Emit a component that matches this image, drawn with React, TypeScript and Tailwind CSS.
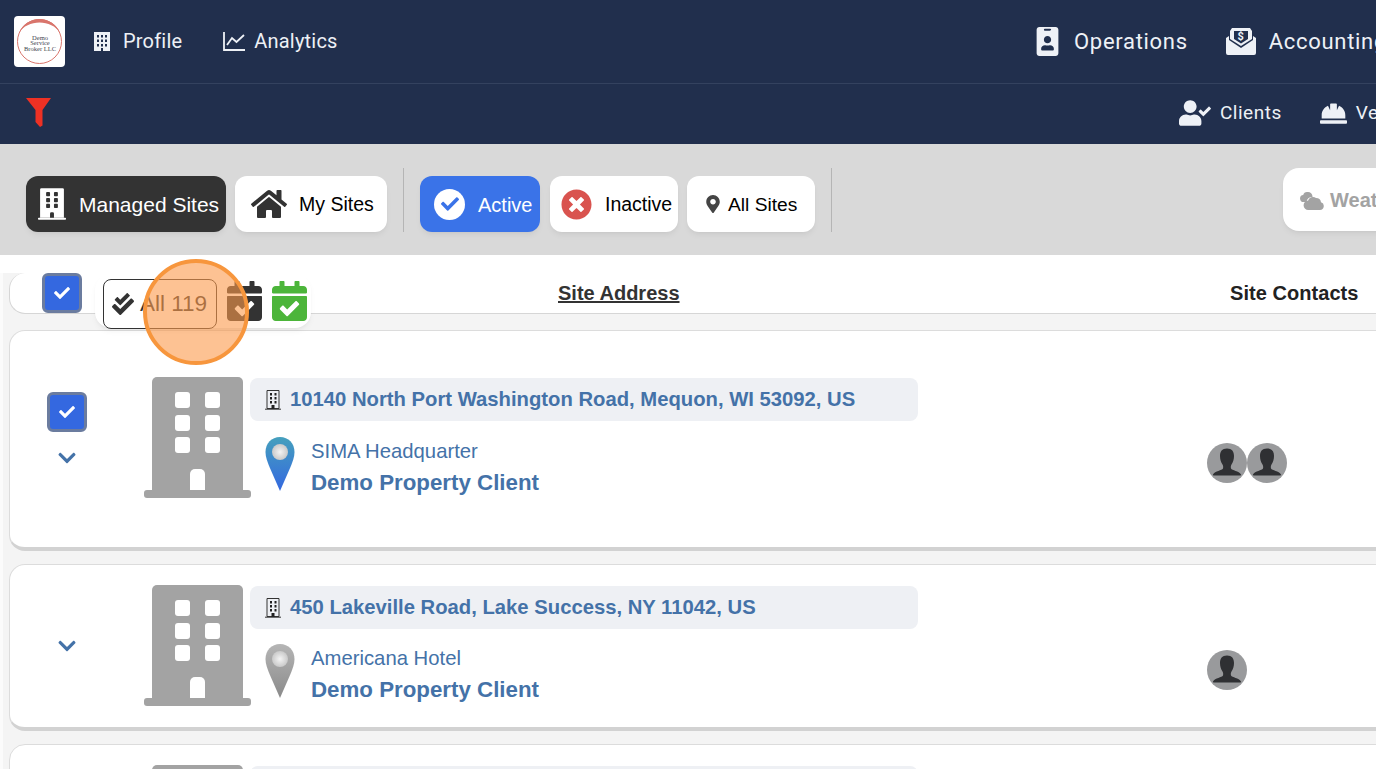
import { ReactNode } from 'react'
import {
  FaCalendarCheck,
  FaCheck,
  FaCheckDouble,
  FaChevronDown,
  FaHardHat,
  FaHome,
  FaIdBadge,
  FaMapMarkerAlt,
  FaTimesCircle,
  FaUserCheck,
} from 'react-icons/fa'

function Logo() {
  return (
    <div className="w-[51px] h-[51px] rounded bg-white shrink-0">
      <svg viewBox="0 0 51 51" className="w-full h-full">
        <circle cx="25.5" cy="25.5" r="22" fill="none" stroke="#d9756c" strokeWidth="1" />
        <path d="M5 17A22 22 0 0 1 46 17C38 3 13 3 5 17Z" fill="#d9756c" />
        <g fontFamily="Liberation Serif, serif" fontSize="6.500" fill="#3f4650" textAnchor="middle">
          <text x="26" y="23.500">Demo</text>
          <text x="26" y="29">Service</text>
          <text x="26" y="34.500">Broker LLC</text>
        </g>
      </svg>
    </div>
  )
}

function EnvelopeDollar({ className }: { className?: string }) {
  return (
    <svg viewBox="0 0 30 28" className={className} fill="currentColor">
      <path d="M6 1h18l2 3v8l-11 7-11-7V4z" />
      <path d="M0 11l3-2v4l12 8 12-8V9l3 2v15a2 2 0 0 1-2 2H2a2 2 0 0 1-2-2z" />
      <path d="M8 4h14v8l-7 4.500-7-4.500z" fill="#212f4d" />
      <text x="15" y="13" fontSize="11" fontWeight="700" textAnchor="middle" fontFamily="Roboto, sans-serif">$</text>
    </svg>
  )
}

function BuildingGlyph({ className, fill, hole }: { className: string; fill: string; hole: string }) {
  return (
    <svg viewBox="0 0 107 121" className={className}>
      <path d="M8 5a5 5 0 0 1 5-5h81a5 5 0 0 1 5 5v108H8z" fill={fill} />
      <rect x="0" y="113" width="107" height="8" rx="3" fill={fill} />
      {[15, 38, 60].map((y) =>
        [31, 61].map((x) => <rect key={`${x}-${y}`} x={x} y={y} width="15" height="16" rx="3" fill={hole} />),
      )}
      <path d="M46 97a5 5 0 0 1 5-5h5a5 5 0 0 1 5 5v16H46z" fill={hole} />
    </svg>
  )
}

function SmallBuilding() {
  return (
    <svg viewBox="0 0 16 20" className="w-4 h-5 shrink-0">
      <path d="M2 .500h12v18H2z" fill="none" stroke="#333" />
      <path d="M0 19.200h16" stroke="#333" />
      {[3, 7, 11].map((y) =>
        [5, 9.500].map((x) => <rect key={`${x}-${y}`} x={x} y={y} width="2" height="2.500" fill="#222" />),
      )}
      <rect x="6.500" y="15" width="3" height="4" fill="#222" />
    </svg>
  )
}

function Pin({ id, from, to }: { id: string; from: string; to: string }) {
  return (
    <svg viewBox="0 0 30 54" className="w-[30px] h-[54px] shrink-0">
      <defs>
        <linearGradient id={id} x1="0" y1="0" x2="0" y2="1">
          <stop offset="0" stopColor={from} />
          <stop offset="1" stopColor={to} />
        </linearGradient>
        <radialGradient id={`${id}-c`}>
          <stop offset="0" stopColor="#f4f4f4" />
          <stop offset="1" stopColor="#c9c9c9" />
        </radialGradient>
      </defs>
      <path d="M15 0C6.500 0 .500 6.500.500 15c0 5 2 10 4 15l10.500 24 10.500-24c2-5 4-10 4-15C29.500 6.500 23.500 0 15 0z" fill={`url(#${id})`} />
      <circle cx="15" cy="15" r="8" fill={`url(#${id}-c)`} />
    </svg>
  )
}

function Avatar() {
  return (
    <svg viewBox="0 0 40 40" className="w-10 h-10 shrink-0">
      <circle cx="20" cy="20" r="20" fill="#999a9c" />
      <path d="M20 5.500c-5 0-7 3-7 7.500 0 3.500 1 6.500 2.500 8.500.8 1 .8 3 .500 4-1 2-8 2.500-10 6-.3.500.3 1 1 1h26c.7 0 1.300-.500 1-1-2-3.500-9-4-10-6-.3-1-.3-3 .500-4 1.500-2 2.500-5 2.500-8.500 0-4.500-2-7.500-7-7.500z" fill="#2f3033" />
    </svg>
  )
}

function Checkbox() {
  return (
    <div className="w-10 h-10 rounded-md bg-[#3468e0] border-[3px] border-[#6b7c9f] flex items-center justify-center text-white">
      <FaCheck size={16} />
    </div>
  )
}

function ToolButton({ children, className }: { children: ReactNode; className: string }) {
  return (
    <button className={`h-14 rounded-xl flex items-center shrink-0 shadow-md shadow-black/5 ${className}`}>
      {children}
    </button>
  )
}

type Site = {
  address: string
  name: string
  pin: [string, string]
  contacts: number
  selected?: boolean
}

function SiteCard({ site, id }: { site: Site; id: string }) {
  return (
    <div
      className={`bg-white rounded-2xl border border-[#dcdcdc] border-b-4 border-b-[#d2d2d2] -mr-10 flex items-start ${
        site.selected ? 'h-[221px] pt-[46px]' : 'h-[167px] pt-5'
      }`}
    >
      <div className={`w-[114px] shrink-0 flex flex-col items-center text-[#4472a8] ${site.selected ? 'pt-[15px]' : 'pt-[51px]'}`}>
        {site.selected && <Checkbox />}
        <FaChevronDown size={20} className={site.selected ? 'mt-4' : ''} />
      </div>
      <div className="ml-[20px]">
        <BuildingGlyph className="w-[107px] h-[121px] shrink-0" fill="#a3a3a3" hole="#fff" />
      </div>
      <div className="w-[668px] shrink-0 pt-px -ml-px">
        <div className="h-[43px] rounded-lg bg-[#eef0f4] flex items-center pl-[15px] gap-[9px] text-[20.250px] font-bold text-[#4472a8]">
          <SmallBuilding />
          <span>{site.address}</span>
        </div>
        <div className={`flex items-start pl-[15px] text-[#4472a8] ${site.selected ? 'pt-4' : 'pt-[15px]'}`}>
          <Pin id={id} from={site.pin[0]} to={site.pin[1]} />
          <div className="ml-[16px]">
            <div className="text-[20.300px] leading-7">{site.name}</div>
            <div className="text-[22.300px] font-bold leading-[34px] mt-px">Demo Property Client</div>
          </div>
        </div>
      </div>
      <div className={`flex ml-[289px] ${site.selected ? 'pt-[66px]' : 'pt-[65px]'}`}>
        {Array.from({ length: site.contacts }).map((_, i) => (
          <Avatar key={i} />
        ))}
      </div>
    </div>
  )
}

const sites: Site[] = [
  {
    address: '10140 North Port Washington Road, Mequon, WI 53092, US',
    name: 'SIMA Headquarter',
    pin: ['#45a0bd', '#3468e0'],
    contacts: 2,
    selected: true,
  },
  {
    address: '450 Lakeville Road, Lake Success, NY 11042, US',
    name: 'Americana Hotel',
    pin: ['#b5b5b5', '#8a8a8a'],
    contacts: 1,
  },
]

export default function App() {
  return (
    <div className="relative w-[1376px] h-[769px] overflow-hidden bg-[#f4f4f4] font-['Liberation_Sans',sans-serif]">
      {/* Top nav */}
      <header className="bg-[#212f4d] text-[#eef1f6] font-['Roboto',sans-serif]">
        <div className="h-[84px] border-b border-[#34425f] flex items-center pl-[14px] pb-[1px]">
          <Logo />
          <div className="flex items-center ml-[29px] w-[939px] shrink-0 text-[20px] tracking-[0.2px]">
            <svg viewBox="0 0 16 19" className="w-4 h-[19px]" fill="currentColor">
              <path fillRule="evenodd" d="M0 0h16v19H0zM3 3v2.500h2V3zm4 0v2.500h2V3zm4 0v2.500h2V3zM3 7.500V10h2V7.500zm4 0V10h2V7.500zm4 0V10h2V7.500zM3 12v2.500h2V12zm4 0v2.500h2V12zm4 0v2.500h2V12zM7 16v3h2v-3z" />
            </svg>
            <span className="ml-[13px]">Profile</span>
            <svg viewBox="0 0 22 19" className="w-[22px] h-[19px] ml-[41px]" fill="none" stroke="currentColor" strokeWidth="1.800">
              <path d="M1 0v18h21" />
              <path d="M4 13l5-7 4.500 4L21 3" />
            </svg>
            <span className="ml-[9px]">Analytics</span>
          </div>
          <div className="flex items-center shrink-0 text-[22px] tracking-[0.7px]">
            <FaIdBadge size={29} />
            <span className="ml-[12px]">Operations</span>
            <EnvelopeDollar className="w-[30px] h-[28px] ml-[38px]" />
            <span className="ml-[13px]">Accounting</span>
          </div>
        </div>
        <div className="h-[60px] flex items-center pl-[26px] tracking-[0.5px]">
          <svg viewBox="0 0 25 29" className="w-[25px] h-[29px] shrink-0 -mt-[3px]" fill="#ee3124">
            <path d="M0 0h25l-8.500 12v15.500L14 29l-4.500-5V12z" />
          </svg>
          <div className="flex items-center ml-[1128px] -mt-0.5 shrink-0 text-[19px]">
            <FaUserCheck size={32} />
            <span className="ml-[9px]">Clients</span>
            <FaHardHat size={27} className="ml-[38px]" />
            <span className="ml-[9px]">Vendors</span>
          </div>
        </div>
      </header>

      {/* Toolbar */}
      <div className="h-[111px] bg-[#d9d9d9] flex items-center pl-[26px] pt-[9px] text-black text-[19.500px]">
        <ToolButton className="w-[200px] bg-[#333333] text-white pl-[12px] gap-[13px] text-[21px]">
          <BuildingGlyph className="w-[28px] h-[32px]" fill="#fff" hole="#333333" />
          <span className="mt-0.5">Managed Sites</span>
        </ToolButton>
        <ToolButton className="w-[152px] ml-[9px] bg-white pl-[16px] gap-[12px]">
          <FaHome size={36} className="text-[#333]" />
          <span className="mt-0.5">My Sites</span>
        </ToolButton>
        <div className="w-px h-16 shrink-0 bg-[#b5b5b5] ml-[16px] -mt-2" />
        <ToolButton className="w-[120px] ml-[16px] bg-[#3a73e8] text-white pl-[14px] gap-[13px] text-[20px]">
          <span className="w-[31px] h-[31px] rounded-full bg-white flex items-center justify-center text-[#3a73e8]">
            <FaCheck size={18} />
          </span>
          <span className="mt-0.5">Active</span>
        </ToolButton>
        <ToolButton className="w-[128px] ml-[10px] bg-white pl-[11px] gap-[13px]">
          <FaTimesCircle size={31} className="text-[#d9534f]" />
          <span className="mt-0.5">Inactive</span>
        </ToolButton>
        <ToolButton className="w-[128px] ml-[9px] bg-white pl-[17px] gap-[6px] text-[19.200px]">
          <FaMapMarkerAlt size={18} className="text-[#444]" />
          <span className="mt-0.5">All Sites</span>
        </ToolButton>
        <div className="w-px h-16 shrink-0 bg-[#b5b5b5] ml-[16px] -mt-2" />
        <button className="w-[140px] h-[63px] ml-[451px] -mt-[9px] rounded-2xl bg-white shadow-md shadow-black/5 shrink-0 flex items-center pl-[17px] gap-[6px] text-[20px] font-bold text-[#a3a3a3]">
          <svg viewBox="0 0 24 20" className="w-6 h-5 shrink-0" fill="currentColor">
            <path d="M7 2a4 4 0 0 0-3.800 3A3.500 3.500 0 0 0 4 12h2.500a6 6 0 0 1 6-5c.3-3-2-5-4.500-5z" />
            <path d="M13 7a5 5 0 0 0-4.800 3.500A4.500 4.500 0 0 0 8.500 20H20a4 4 0 0 0 1-7.800A5 5 0 0 0 16 8a5 5 0 0 0-3-1z" />
          </svg>
          <span>Weather</span>
        </button>
      </div>

      {/* List */}
      <main>
        <div className="bg-white h-[18px]" />
        <div className="pl-[6px] border-l-[3px] border-[#fbfbfb] -mr-10">
          <div className="h-[41px] bg-white rounded-l-2xl border-l border-b border-[#d6d6d6] relative font-bold text-[20px] text-[#333]">
            <span className="absolute left-[548px] top-[5px] underline">Site Address</span>
            <span className="absolute left-[1220px] top-[5px] text-[#222] tracking-[0.05px]">Site Contacts</span>
          </div>
          <div className="pt-[16px] flex flex-col gap-[13px]">
            {sites.map((s, i) => (
              <SiteCard key={s.address} site={s} id={`pin-${i}`} />
            ))}
            {/* next card, only its top shows */}
            <div className="h-[167px] -mr-10 pt-5 bg-white rounded-2xl border border-[#dcdcdc] flex items-start pl-[134px]">
              <BuildingGlyph className="w-[107px] h-[121px] shrink-0" fill="#a3a3a3" hole="#fff" />
              <div className="w-[668px] h-[43px] mt-px -ml-px rounded-lg bg-[#eef0f4] shrink-0" />
            </div>
          </div>
        </div>
      </main>

      {/* Header checkbox + bulk select, floats over the table header */}
      <div className="absolute left-[42px] top-[273px]">
        <Checkbox />
      </div>
      <div className="absolute left-[95px] top-[274px] w-[216px] h-[54px] rounded-2xl bg-white shadow-md shadow-black/5 flex items-start pl-[8px]">
        <div className="w-[114px] h-[50px] mt-[5px] rounded-lg border border-[#333] flex items-center pl-[8px] gap-[6px] text-[22.500px] text-[#333]">
          <FaCheckDouble size={22} />
          <span>All 119</span>
        </div>
        <FaCalendarCheck size={40} className="mt-[7px] ml-[9px] text-[#333] w-[37px]" />
        <FaCalendarCheck size={40} className="mt-[7px] ml-[8px] text-[#4cb53a] w-[37px]" />
      </div>

      {/* Click highlight */}
      <div className="absolute left-[143px] top-[259px] w-[106px] h-[106px] rounded-full border-4 border-[#f7963d] bg-[#fb9a4b]/60" />
    </div>
  )
}
